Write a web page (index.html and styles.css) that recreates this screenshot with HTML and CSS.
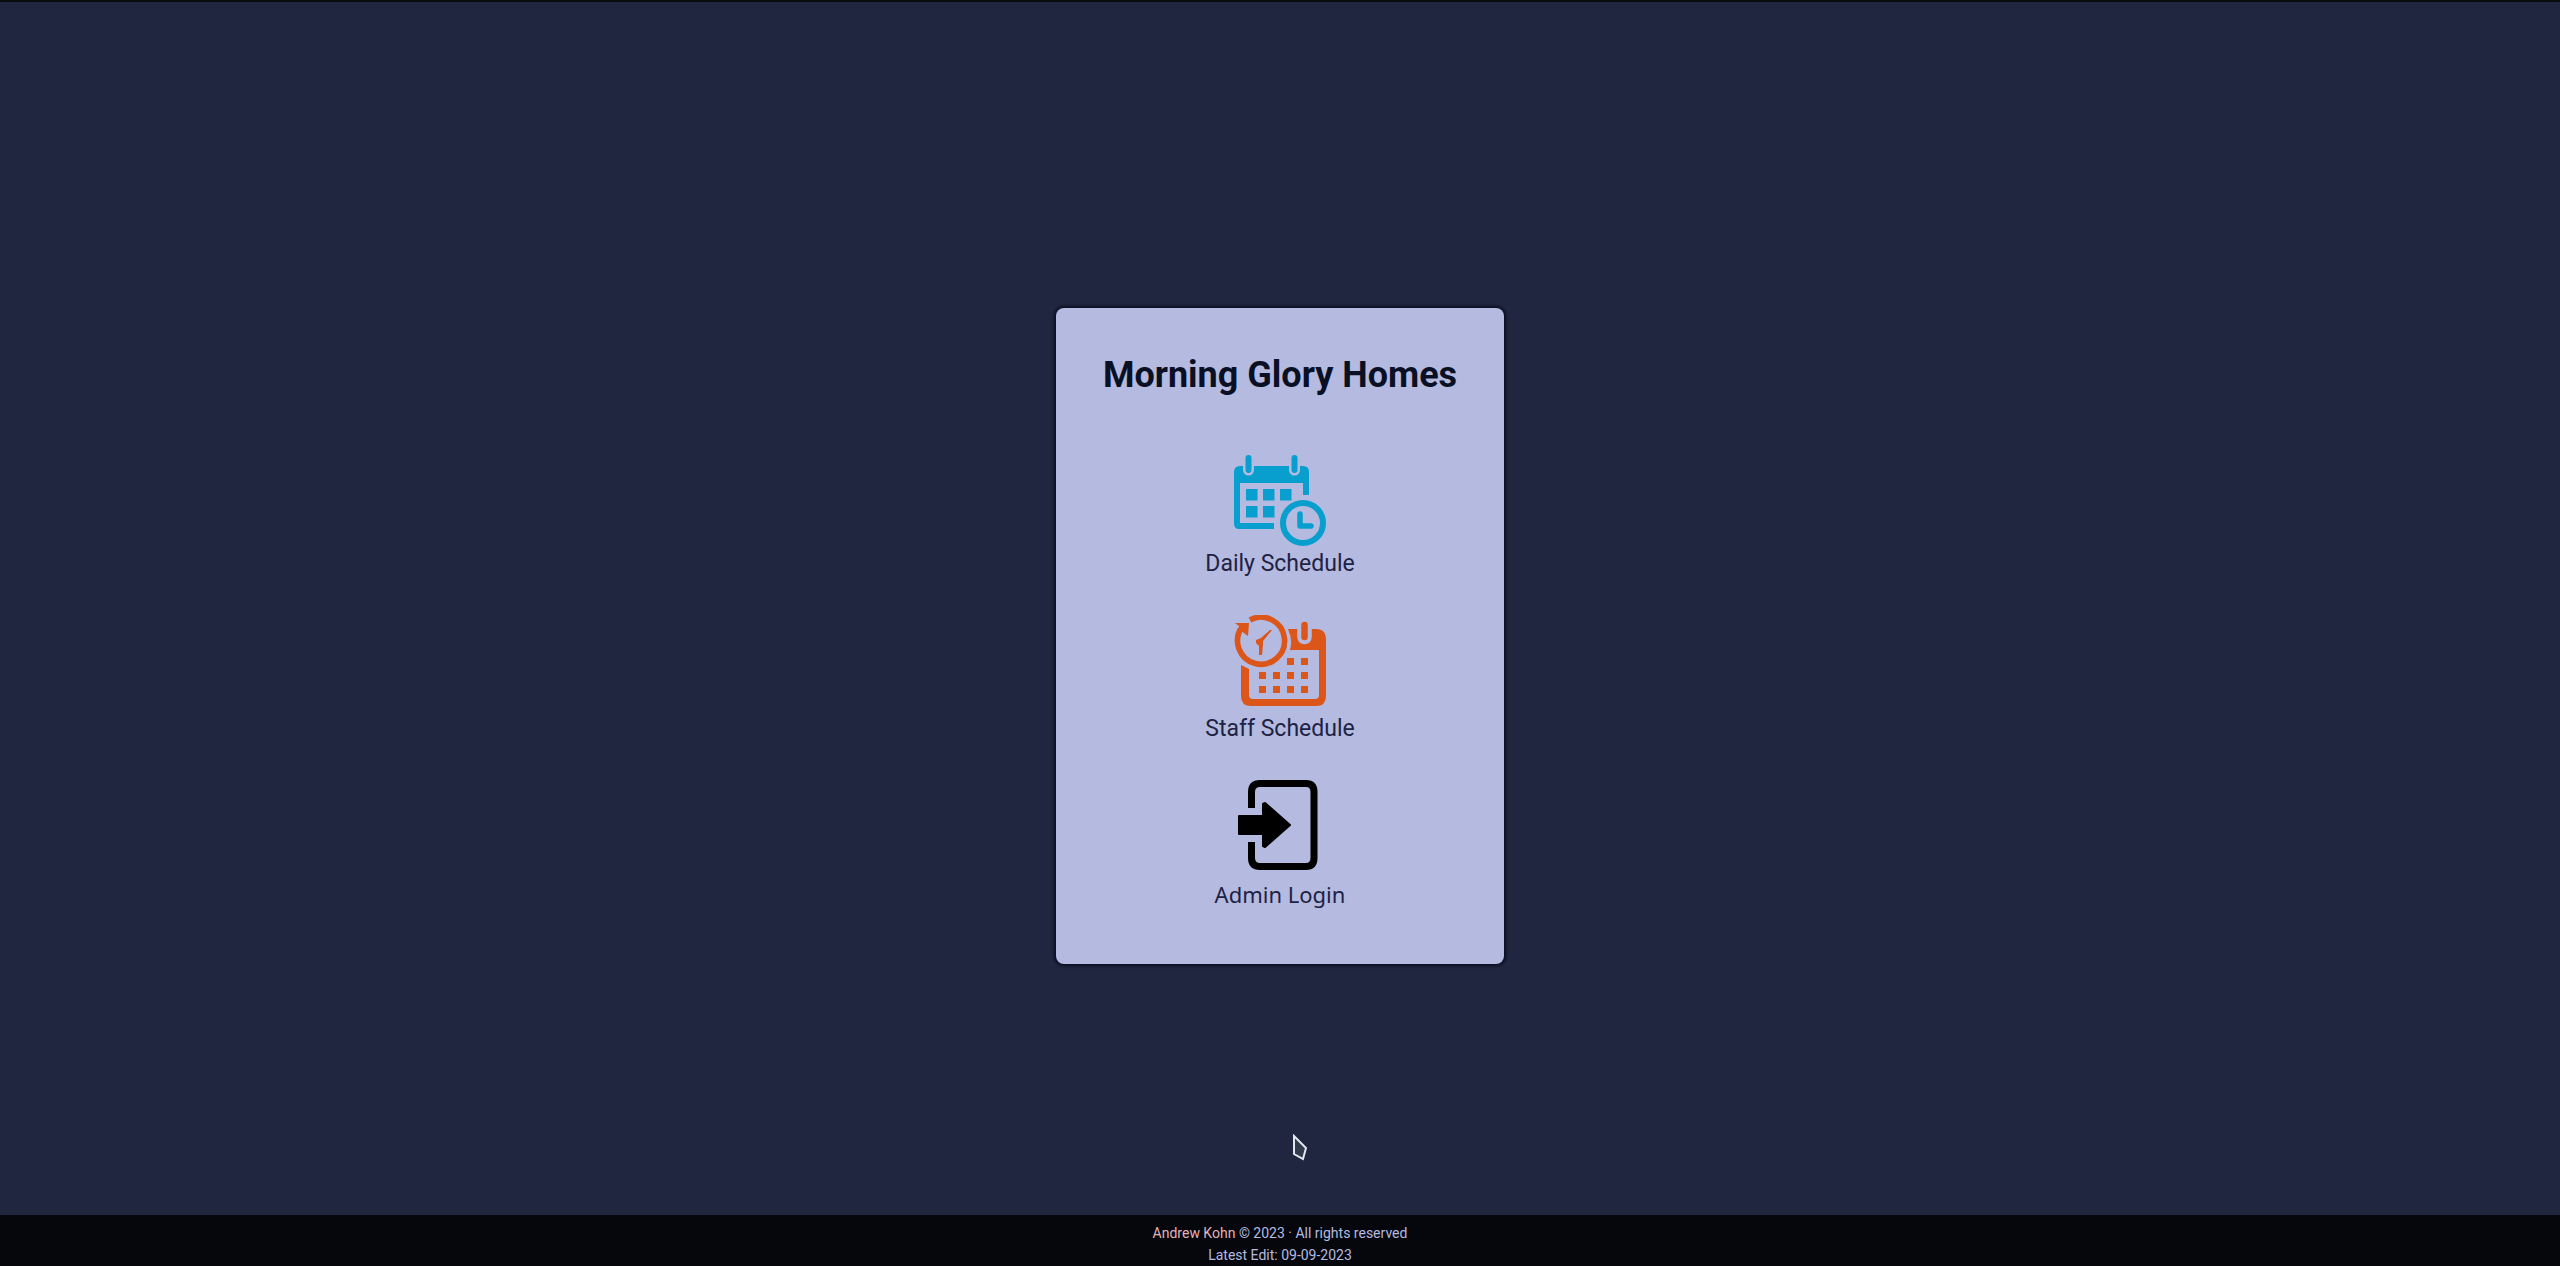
FILE: index.html
```html
<!DOCTYPE html>
<html lang="en">
<head>
  <meta charset="utf-8">
  <meta name="viewport" content="width=device-width, initial-scale=1">
  <title>Morning Glory Homes</title>
  <link rel="stylesheet" href="styles.css">
</head>
<body>
  <main class="main">
    <section class="card">
      <h1 class="title">Morning Glory Homes</h1>
      <nav class="menu">
        <a class="item" href="#daily">
          <svg class="icon icon-daily" viewBox="0 0 96 96" aria-hidden="true">
            <path fill="currentColor" d="M8 16H71Q77 16 77 22V45H71V33H8V73H42V79H7Q2 79 2 73V22Q2 16 8 16Z"/>
            <path class="cutout" d="M16.500 8V20M62.500 8V20"/>
            <path class="peg" d="M16.500 8V20M62.500 8V20"/>
            <path fill="currentColor" d="M14 39h11.500v11.500h-11.500zM31 39h11.500v11.500h-11.500zM48 39h11.500v11.500h-11.500zM14 56h11.500v11.500h-11.500zM31 56h11.500v11.500h-11.500z"/>
            <circle cx="71" cy="73" r="20" fill="none" stroke="currentColor" stroke-width="6"/>
            <path d="M68 64V76H79" fill="none" stroke="currentColor" stroke-width="5.500" stroke-linecap="round" stroke-linejoin="round"/>
          </svg>
          <span class="label">Daily Schedule</span>
        </a>
        <a class="item" href="#staff">
          <svg class="icon icon-staff" viewBox="0 0 96 96" aria-hidden="true">
            <path fill="currentColor" d="M56 14H84Q94 14 94 25V81Q94 91 84 91H19Q9 91 9 81V50L17 54V80Q17 84 21 84H83Q87 84 87 80V35H58Q61 25 56 14Z"/>
            <path d="M72.500 8V22" fill="none" stroke-width="14.500" stroke-linecap="round" class="gap"/>
            <path d="M72.500 10V22" fill="none" stroke="currentColor" stroke-width="6.500" stroke-linecap="round"/>
            <path fill="currentColor" d="M55 43h7v7h-7zM69 43h7v7h-7zM27 57h7v7h-7zM41 57h7v7h-7zM55 57h7v7h-7zM69 57h7v7h-7zM27 71h7v7h-7zM41 71h7v7h-7zM55 71h7v7h-7zM69 71h7v7h-7z"/>
            <path d="M18 5A23.500 23.500 0 1 1 10 12" fill="none" stroke="currentColor" stroke-width="5.600"/>
            <path fill="currentColor" d="M3 8H17L16 21L12 18L7 14L7 11ZM40 15L31 26L31 30L30 40H27L27 31L24 28V25L29 23L38 15Z"/>
          </svg>
          <span class="label">Staff Schedule</span>
        </a>
        <a class="item" href="#login">
          <svg class="icon icon-login" viewBox="0 0 96 96" aria-hidden="true">
            <path d="M19.500 28V12Q19.500 3.500 28 3.500H74Q82 3.500 82 12V78Q82 86.500 74 86.500H28Q19.500 86.500 19.500 78V62" fill="none" stroke="currentColor" stroke-width="7"/>
            <path d="M7 36H31V24L33 23L58 45L33 67L31 66V54H7Z" fill="currentColor" stroke="currentColor" stroke-width="2" stroke-linejoin="round"/>
          </svg>
          <span class="label label-login">Admin Login</span>
        </a>
      </nav>
    </section>
    <svg class="pointer" viewBox="0 0 16 28" aria-hidden="true">
      <path d="M2 2L14 14L11 25L2 20Z"/>
    </svg>
  </main>
  <footer class="footer">
    <p class="line"><a class="author" href="#author">Andrew Kohn</a> © 2023 · All rights reserved</p>
    <p class="line">Latest Edit: 09-09-2023</p>
  </footer>
</body>
</html>
```
FILE: styles.css
```css
* {
  box-sizing: border-box;
}

body {
  margin: 0;
  min-height: 100vh;
  display: flex;
  flex-direction: column;
  border-top: 2px solid #080c0c;
  background: #20263f;
  color: #1e2243;
  font-family: Roboto, "Liberation Sans", sans-serif;
}

.main {
  position: relative;
  flex: 1;
  display: flex;
  align-items: center;
  justify-content: center;
  padding-top: 54px;
}

.card {
  padding: 40px 47px 52px;
  border-radius: 8px;
  background: #b4bae0;
  box-shadow: 0 0 3px 2px #0a0e23;
}

.title {
  margin: 0 0 48px;
  color: #0a1023;
  font-size: 36px;
  font-weight: 700;
  line-height: 54px;
  text-align: center;
}

.menu {
  display: flex;
  flex-direction: column;
  align-items: center;
  gap: 33px;
}

.item {
  display: flex;
  flex-direction: column;
  align-items: center;
  color: inherit;
  text-decoration: none;
}

.icon {
  display: block;
  width: 96px;
  height: 96px;
}

.icon-daily {
  color: #089fce;
}

.icon-staff {
  color: #dc5519;
}

.icon-login {
  color: #000000;
}

.cutout {
  fill: none;
  stroke: #b4bae0;
  stroke-width: 11px;
  stroke-linecap: round;
}

.peg {
  fill: none;
  stroke: currentColor;
  stroke-width: 6px;
  stroke-linecap: round;
}

.gap {
  stroke: #b4bae0;
}

.label {
  font-size: 23px;
  line-height: 36px;
}

.label-login {
  font-family: "Noto Sans", "Open Sans", sans-serif;
  font-size: 22px;
}

.pointer {
  position: absolute;
  left: calc(50% + 12px);
  bottom: 53px;
  width: 16px;
  height: 28px;
  fill: #303c4c;
  stroke: #e2e6ee;
  stroke-width: 2px;
}

.footer {
  padding: 7px 16px 0;
  background: #05070c;
  color: #b4bae0;
  font-size: 14px;
  line-height: 22px;
  text-align: center;
}

.line {
  margin: 0;
}

.author {
  color: #e0b4b8;
  text-decoration: none;
}
```
